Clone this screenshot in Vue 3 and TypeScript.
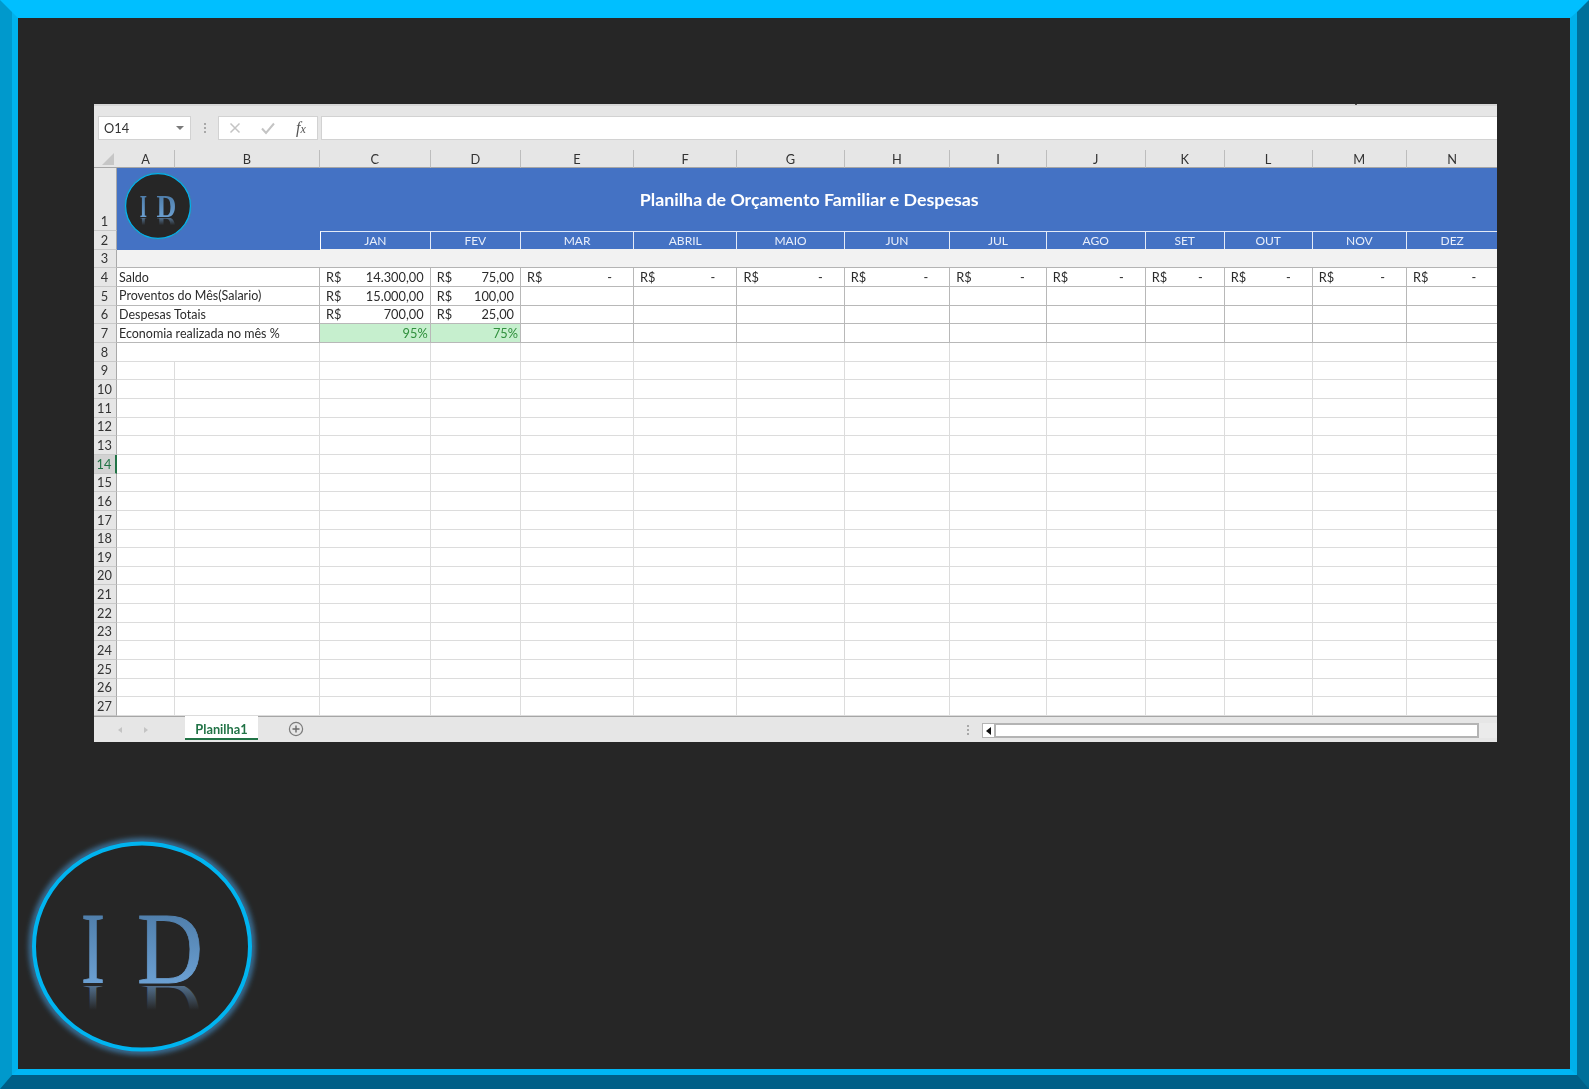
<script setup lang="ts">
const columns: string[] = 'ABCDEFGHIJKLMN'.split('')
const months: string[] = ['JAN', 'FEV', 'MAR', 'ABRIL', 'MAIO', 'JUN', 'JUL', 'AGO', 'SET', 'OUT', 'NOV', 'DEZ']

interface DataRow {
  n: number
  label: string
  cells: { amount: string; money: boolean; good?: boolean }[]
}

const blanks = (count: number) => Array.from({ length: count }, () => ({ amount: '', money: false }))
const dashes = (count: number) => Array.from({ length: count }, () => ({ amount: '-', money: true }))

const dataRows: DataRow[] = [
  {
    n: 4,
    label: 'Saldo',
    cells: [{ amount: '14.300,00', money: true }, { amount: '75,00', money: true }, ...dashes(10)],
  },
  {
    n: 5,
    label: 'Proventos do Mês(Salario)',
    cells: [{ amount: '15.000,00', money: true }, { amount: '100,00', money: true }, ...blanks(10)],
  },
  {
    n: 6,
    label: 'Despesas Totais',
    cells: [{ amount: '700,00', money: true }, { amount: '25,00', money: true }, ...blanks(10)],
  },
  {
    n: 7,
    label: 'Economia realizada no mês %',
    cells: [{ amount: '95%', money: false, good: true }, { amount: '75%', money: false, good: true }, ...blanks(10)],
  },
]

const emptyRows: number[] = Array.from({ length: 19 }, (_, i) => i + 9)
</script>

<template>
  <div class="frame">
    <main class="stage">
      <section class="window">
        <i class="speck"></i>
        <div class="formula-bar">
          <div class="name-box">
            <span>O14</span>
            <i class="drop"></i>
          </div>
          <div class="grip"><i></i><i></i><i></i></div>
          <div class="fx-box">
            <svg class="fx-icon" width="14" height="14" viewBox="0 0 14 14">
              <path d="M2.5 2.5 11.5 11.5M11.5 2.5 2.5 11.5" stroke="#c4c4c4" stroke-width="1.5" fill="none" />
            </svg>
            <svg class="fx-icon" width="16" height="14" viewBox="0 0 16 14">
              <path d="M2 7.5 6 12 14 2.5" stroke="#c4c4c4" stroke-width="2" fill="none" />
            </svg>
            <span class="fx">f<small>x</small></span>
          </div>
          <div class="formula-input"></div>
        </div>

        <div class="sheet">
          <div class="corner"><i></i></div>
          <div v-for="c in columns" :key="c" class="col-head">{{ c }}</div>

          <div class="row-head tall">1</div>
          <div class="title">
            <svg class="logo logo-small" viewBox="0 0 240 240">
              <defs>
                <linearGradient id="idLetters" x1="0" y1="0" x2="0" y2="1">
                  <stop offset="0" stop-color="#47749f" />
                  <stop offset="1" stop-color="#74aade" />
                </linearGradient>
                <linearGradient id="idFade" gradientUnits="userSpaceOnUse" x1="0" y1="157" x2="0" y2="130">
                  <stop offset="0" stop-color="#6f9fcf" stop-opacity="0" />
                  <stop offset="0.12" stop-color="#6f9fcf" stop-opacity="0" />
                  <stop offset="0.12" stop-color="#6f9fcf" stop-opacity="0.6" />
                  <stop offset="1" stop-color="#6f9fcf" stop-opacity="0" />
                </linearGradient>
                <filter id="idGlow" x="-20%" y="-20%" width="140%" height="140%">
                  <feGaussianBlur stdDeviation="2.5" />
                </filter>
                <text id="idMarkI" class="mark" x="59" y="157" textLength="24" lengthAdjust="spacingAndGlyphs">I</text>
                <text id="idMarkD" class="mark" x="115" y="157" textLength="66" lengthAdjust="spacingAndGlyphs">D</text>
              </defs>
              <circle cx="120" cy="120" r="110" fill="none" stroke="#3f7fb0" stroke-width="7" stroke-opacity="0.8" filter="url(#idGlow)" />
              <circle cx="120" cy="120" r="108" fill="#262626" stroke="#00b4f0" stroke-width="4" />
              <text class="mark" x="59" y="157" fill="url(#idLetters)" textLength="24" lengthAdjust="spacingAndGlyphs">I</text>
              <text class="mark" x="115" y="157" fill="url(#idLetters)" textLength="66" lengthAdjust="spacingAndGlyphs">D</text>
              <use href="#idMarkI" fill="url(#idFade)" transform="matrix(1 0 0 -1 0 314)" />
              <use href="#idMarkD" fill="url(#idFade)" transform="matrix(1 0 0 -1 0 314)" />
            </svg>
            <span>Planilha de Orçamento Familiar e Despesas</span>
          </div>

          <div class="row-head">2</div>
          <div class="band"></div>
          <div v-for="m in months" :key="m" class="month">{{ m }}</div>

          <div class="row-head">3</div>
          <div class="spacer"></div>

          <template v-for="row in dataRows" :key="row.n">
            <div class="row-head">{{ row.n }}</div>
            <div class="label">{{ row.label }}</div>
            <div v-for="(cell, i) in row.cells" :key="i" class="cell" :class="{ good: cell.good, dash: cell.amount === '-' }">
              <span v-if="cell.money">R$</span>
              <span>{{ cell.amount }}</span>
            </div>
          </template>

          <div class="row-head">8</div>
          <div class="blank wide"></div>
          <div v-for="m in months" :key="'r8' + m" class="blank"></div>

          <template v-for="n in emptyRows" :key="n">
            <div class="row-head" :class="{ active: n === 14 }">{{ n }}</div>
            <div v-for="c in columns" :key="c" class="blank"></div>
          </template>
        </div>

        <footer class="tab-bar">
          <div class="tab-nav">
            <i class="nav-left"></i>
            <i class="nav-right"></i>
          </div>
          <div class="tab">Planilha1</div>
          <svg class="add" width="16" height="16" viewBox="0 0 16 16">
            <circle cx="8" cy="8" r="6.6" fill="none" stroke="#7b7b7b" stroke-width="1.2" />
            <path d="M8 4.5v7M4.5 8h7" stroke="#6a6a6a" stroke-width="1.4" />
          </svg>
          <div class="grip bar-grip"><i></i><i></i><i></i></div>
          <div class="scroll">
            <div class="scroll-btn"><i></i></div>
            <div class="scroll-track"></div>
          </div>
          <div class="scroll-end"></div>
        </footer>
      </section>

      <svg class="logo logo-large" viewBox="0 0 240 240">
        <ellipse cx="120" cy="120.5" rx="110" ry="105" fill="none" stroke="#3f7fb0" stroke-width="7" stroke-opacity="0.8" filter="url(#idGlow)" />
        <ellipse cx="120" cy="120.5" rx="108" ry="103" fill="#262626" stroke="#00b4f0" stroke-width="4" />
        <text class="mark" x="59" y="157" fill="url(#idLetters)" stroke="url(#idLetters)" stroke-width="0.8" textLength="24" lengthAdjust="spacingAndGlyphs">I</text>
        <text class="mark" x="115" y="157" fill="url(#idLetters)" stroke="url(#idLetters)" stroke-width="0.8" textLength="66" lengthAdjust="spacingAndGlyphs">D</text>
        <use href="#idMarkI" fill="url(#idFade)" transform="matrix(1 0 0 -1 0 314)" />
        <use href="#idMarkD" fill="url(#idFade)" transform="matrix(1 0 0 -1 0 314)" />
      </svg>
    </main>
  </div>
</template>

<style>
html,
body {
  margin: 0;
  background: #262626;
  overflow: hidden;
}
</style>

<style scoped>
.frame {
  box-sizing: border-box;
  width: 1589px;
  height: 1089px;
  border-style: solid;
  border-width: 12px 12px 14px 12px;
  border-color: #00bfff #00709a #005f87 #0099cc;
}

.stage {
  box-sizing: border-box;
  height: 100%;
  border-style: solid;
  border-width: 6px 7px 6px 6px;
  border-color: #00bfff #00b0ea #00b6f4 #00b2ec;
  background: #262626;
  overflow: hidden;
}

.window {
  box-sizing: border-box;
  position: relative;
  width: 1403px;
  height: 638px;
  margin: 86px 0 0 76px;
  background: #e6e6e6;
  display: flex;
  flex-direction: column;
  font-family: Lato, "Liberation Sans", sans-serif;
  font-size: 12.8px;
  color: #2b2b2b;
  filter: blur(0.35px);
  overflow: hidden;
}

.speck {
  position: absolute;
  left: 1261px;
  top: 0;
  width: 2px;
  height: 1px;
  background: #555;
}

.formula-bar {
  flex: 0 0 46px;
  box-sizing: border-box;
  display: flex;
  align-items: flex-start;
  padding: 10px 0 0 4px;
  border-top: 2px solid #d6d6d6;
  background: #e6e6e6;
}

.name-box {
  box-sizing: border-box;
  width: 93px;
  height: 24px;
  display: flex;
  align-items: center;
  justify-content: space-between;
  padding: 0 6px 0 5px;
  background: #fff;
  border: 1px solid #d2d2d2;
  color: #333;
}

.drop {
  width: 0;
  height: 0;
  border-left: 4px solid transparent;
  border-right: 4px solid transparent;
  border-top: 4px solid #7a7a7a;
}

.grip {
  width: 27px;
  height: 24px;
  display: flex;
  flex-direction: column;
  align-items: center;
  justify-content: center;
  gap: 2px;
}

.grip i {
  width: 2px;
  height: 2px;
  background: #a8a8a8;
}

.fx-box {
  box-sizing: border-box;
  width: 100px;
  height: 24px;
  display: flex;
  align-items: center;
  padding-left: 9px;
  background: #fff;
  border: 1px solid #d2d2d2;
}

.fx-icon {
  margin-right: 18px;
}

.fx-icon + .fx-icon {
  margin-right: 20px;
}

.fx {
  font-family: "Liberation Serif", serif;
  font-style: italic;
  font-size: 16px;
  color: #555;
}

.fx small {
  font-size: 12px;
}

.formula-input {
  box-sizing: border-box;
  flex: 1;
  height: 24px;
  margin-left: 3px;
  background: #fff;
  border: 1px solid #d2d2d2;
  border-right: 0;
}

.sheet {
  flex: 0 0 566.4px;
  display: grid;
  grid-template-columns: 23px 58px 145px 110.7px 90.3px 113.1px 103.3px 107.3px 105.5px 96.6px 98.9px 79px 88px 94.3px 91.4px;
  grid-template-rows: 18px 63px repeat(26, 18.67px);
  background: #fff;
  overflow: hidden;
}

.sheet > div {
  box-sizing: border-box;
  min-width: 0;
}

.corner {
  position: relative;
  background: #e6e6e6;
  border-bottom: 1px solid #a6a6a6;
}

.corner i {
  position: absolute;
  right: 3px;
  bottom: 2px;
  width: 0;
  height: 0;
  border-left: 12px solid transparent;
  border-bottom: 12px solid #c6c6c6;
}

.col-head {
  display: flex;
  align-items: center;
  justify-content: center;
  background: #e6e6e6;
  border-right: 1px solid #bdbdbd;
  border-bottom: 1px solid #a6a6a6;
  color: #333;
}

.row-head {
  display: flex;
  align-items: flex-end;
  justify-content: center;
  line-height: 17px;
  padding-right: 1px;
  background: #e6e6e6;
  border-right: 1px solid #a9a9a9;
  border-bottom: 1px solid #c9c9c9;
  color: #333;
}

.row-head.tall {
  line-height: 16px;
  padding-bottom: 1px;
}

.row-head.active {
  background: #d2d2d2;
  color: #217346;
  border-right: 2px solid #217346;
}

.title {
  grid-column: span 14;
  position: relative;
  display: flex;
  align-items: center;
  justify-content: center;
  padding: 0 0 2px 3px;
  background: #4472c4;
  color: #fff;
  font-size: 17.8px;
  font-weight: 700;
}

.logo-small {
  position: absolute;
  left: 4.7px;
  top: 2px;
  width: 72px;
  height: 72px;
}

.band {
  grid-column: span 2;
  background: #4472c4;
}

.month {
  display: flex;
  align-items: center;
  justify-content: center;
  background: #4472c4;
  color: #e8eefa;
  border-top: 1px solid #e4ebf7;
  border-right: 1px solid #e4ebf7;
  border-bottom: 1px solid #f2f2f2;
  font-size: 12px;
}

.band + .month {
  border-left: 1px solid #fff;
}

.spacer {
  grid-column: span 14;
  background: #f2f2f2;
  border-bottom: 1px solid #b4b4b4;
}

.label {
  grid-column: span 2;
  display: flex;
  align-items: center;
  padding-left: 2px;
  background: #fff;
  border-right: 1px solid #b8b8b8;
  border-bottom: 1px solid #b8b8b8;
  white-space: nowrap;
  font-size: 12.5px;
}

.cell {
  display: flex;
  align-items: center;
  justify-content: space-between;
  padding: 0 6px;
  background: #fff;
  border-right: 1px solid #b8b8b8;
  border-bottom: 1px solid #b8b8b8;
}

.cell.dash {
  padding-right: 21px;
}

.cell.good {
  justify-content: flex-end;
  padding-right: 2px;
  background: #c6efce;
  color: #2f8f3c;
}

.blank {
  background: #fff;
  border-right: 1px solid #dcdcdc;
  border-bottom: 1px solid #dcdcdc;
}

.blank.wide {
  grid-column: span 2;
}

.tab-bar {
  flex: 1;
  position: relative;
  display: flex;
  align-items: flex-start;
  box-sizing: border-box;
  border-top: 1px solid #a6a6a6;
  background: #e6e6e6;
}

.tab-nav {
  width: 91px;
  height: 25px;
  display: flex;
  align-items: center;
  gap: 22px;
  padding-left: 24px;
  box-sizing: border-box;
}

.nav-left,
.nav-right {
  width: 0;
  height: 0;
  border-top: 3.5px solid transparent;
  border-bottom: 3.5px solid transparent;
}

.nav-left {
  border-right: 4px solid #c4c4c4;
}

.nav-right {
  border-left: 4px solid #c4c4c4;
}

.tab {
  box-sizing: border-box;
  width: 73px;
  height: 24px;
  margin-top: -1px;
  padding-top: 3px;
  display: flex;
  align-items: center;
  justify-content: center;
  background: #fff;
  border-bottom: 2px solid #217346;
  color: #217346;
  font-weight: 700;
  font-size: 12.8px;
}

.add {
  margin: 4px 0 0 30px;
}

.bar-grip {
  width: 8px;
  margin: 1px 0 0 660px;
}

.scroll {
  display: flex;
  width: 497px;
  height: 15px;
  margin: 6px 0 0 10px;
  box-sizing: border-box;
}

.scroll-btn {
  width: 14px;
  display: flex;
  align-items: center;
  justify-content: center;
  background: #fff;
  border: 1px solid #b4b4b4;
  border-right-width: 2px;
  box-sizing: border-box;
}

.scroll-btn i {
  width: 0;
  height: 0;
  border-top: 4px solid transparent;
  border-bottom: 4px solid transparent;
  border-right: 5px solid #111;
}

.scroll-track {
  flex: 1;
  background: #fff;
  border: 2px solid #b4b4b4;
  border-left: 0;
  box-sizing: border-box;
}

.scroll-end {
  flex: 1;
  height: 15px;
  margin-top: 6px;
  background: #ebebeb;
}

.logo-large {
  display: block;
  width: 240px;
  height: 240px;
  margin: 84px 0 0 4px;
}

.mark {
  font-family: "Liberation Serif", serif;
  font-size: 102px;
}
</style>
